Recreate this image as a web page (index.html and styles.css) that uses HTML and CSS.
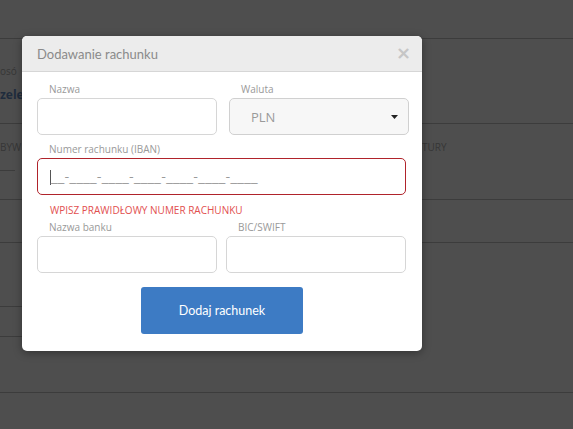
FILE: index.html
```html
<!DOCTYPE html>
<html lang="pl">

<head>
  <meta charset="UTF-8">
  <meta name="viewport" content="width=device-width, initial-scale=1.0">
  <title>Dodawanie rachunku</title>
  <link rel="stylesheet" href="styles.css">
</head>

<body>
  <!-- Page behind the overlay -->
  <div class="page">
    <div class="row row-top"></div>
    <div class="row row-summary">
      <div class="cell-left">
        <span class="muted">osó</span>
        <span class="strong">zele</span>
      </div>
    </div>
    <div class="row row-head">
      <span class="muted head-left">BYW</span>
      <span class="muted head-right">TURY</span>
      <div class="stub stub-head"></div>
    </div>
    <div class="row row-a"></div>
    <div class="row row-plain">
      <div class="stub stub-b"></div>
      <div class="stub stub-c"></div>
    </div>
  </div>

  <!-- Modal -->
  <div class="modal">
    <div class="modal-header">
      <span class="modal-title">Dodawanie rachunku</span>
      <span class="modal-close">&times;</span>
    </div>

    <div class="modal-body">
      <div class="grid grid-top">
        <div class="field">
          <label for="name">Nazwa</label>
          <input type="text" id="name">
        </div>
        <div class="field">
          <label for="currency">Waluta</label>
          <div class="select" id="currency">
            <span>PLN</span>
            <svg width="7" height="4" viewBox="0 0 7 4"><path d="M0 0h7L3.5 4z" fill="#222"/></svg>
          </div>
        </div>
      </div>

      <div class="field field-iban">
        <label for="iban">Numer rachunku (IBAN)</label>
        <div class="input input-error" id="iban">
          <span class="caret"></span><span class="mask">__-____-____-____-____-____-____</span>
        </div>
      </div>
      <div class="error">WPISZ PRAWIDŁOWY NUMER RACHUNKU</div>

      <div class="grid grid-bottom">
        <div class="field">
          <label for="bank">Nazwa banku</label>
          <input type="text" id="bank">
        </div>
        <div class="field">
          <label for="swift">BIC/SWIFT</label>
          <input type="text" id="swift">
        </div>
      </div>

      <div class="actions">
        <button class="button">Dodaj rachunek</button>
      </div>
    </div>
  </div>
</body>

</html>
```

FILE: styles.css
```css
body {
  margin: 0;
  background-color: #4e4e4e;
  font-family: "Open Sans", "DejaVu Sans", sans-serif;
  overflow: hidden;
  height: 429px;
}

/* background page */
.page {
  width: 573px;
}

.row {
  border-bottom: 1px solid #3c3c3c;
  position: relative;
}

.row-top {
  height: 38px;
}

.row-summary {
  height: 84px;
}

.cell-left {
  padding: 25px 0 0 0;
  display: flex;
  flex-direction: column;
  gap: 8px;
  width: 22px;
  white-space: nowrap;
}

.muted {
  color: #363636;
  font-size: 10px;
}

.strong {
  color: #1f2c3d;
  font-weight: bold;
  font-size: 12px;
}

.row-head {
  height: 75px;
}

.head-left {
  position: absolute;
  left: 0;
  top: 16px;
}

.head-right {
  position: absolute;
  left: 422px;
  top: 16px;
}

.stub {
  border-bottom: 1px solid #3c3c3c;
  width: 22px;
}

.stub-head {
  position: absolute;
  left: 0;
  top: 46px;
  width: 15px;
}

.row-a {
  height: 42px;
}

.row-plain {
  height: 149px;
}

.stub-b {
  height: 63px;
}

.stub-c {
  height: 29px;
}

/* modal */
.modal {
  position: absolute;
  left: 22px;
  top: 36px;
  width: 400px;
  background: #fff;
  border-radius: 5px;
  box-shadow: 0 2px 8px rgba(0, 0, 0, 0.35);
  overflow: hidden;
}

.modal-header {
  height: 35px;
  background: #ececec;
  border-bottom: 1px solid #d6d6d6;
  display: flex;
  align-items: center;
  justify-content: space-between;
  padding: 0 11px 0 15px;
}

.modal-title {
  font-family: Lato, "Open Sans", sans-serif;
  font-size: 13px;
  color: #8a8a8a;
}

.modal-close {
  font-family: "DejaVu Sans", sans-serif;
  font-size: 18px;
  font-weight: bold;
  color: #c6c6c6;
  margin-top: -3px;
}

.modal-body {
  padding: 10px 15px 17px 15px;
}

.grid {
  display: grid;
  grid-template-columns: 180px 180px;
}

.grid-top {
  column-gap: 12px;
  margin-bottom: 7px;
}

.grid-bottom {
  column-gap: 9px;
}

.field label {
  display: block;
  font-size: 10px;
  line-height: 14px;
  color: #999;
  margin: 0 0 2px 12px;
}

.field input,
.input,
.select {
  display: block;
  box-sizing: border-box;
  width: 100%;
  height: 37px;
  border: 1px solid #d6d6d6;
  border-radius: 5px;
  background: #fff;
  margin: 0;
}

.select {
  background: #f7f7f7;
  border-color: #d0d0d0;
  display: flex;
  align-items: center;
  justify-content: space-between;
  padding: 0 10px 0 21px;
  font-size: 13px;
  color: #9a9a9a;
}

.field-iban .input {
  width: 369px;
}

.field-iban .input-error {
  border-color: #b0232b;
  display: flex;
  align-items: center;
  padding-left: 12px;
}

.caret {
  width: 1px;
  height: 15px;
  background: #555;
  margin-top: 2px;
}

.mask {
  font-family: "DejaVu Sans", sans-serif;
  font-size: 13px;
  color: #9a9a9a;
  letter-spacing: 0.3px;
}

.error {
  font-size: 10px;
  line-height: 14px;
  color: #e2504f;
  margin: 8px 0 3px 13px;
}

.actions {
  display: flex;
  justify-content: center;
  margin-top: 14px;
}

.button {
  width: 162px;
  height: 47px;
  background-color: #3d7bc4;
  color: #fff;
  border: none;
  border-radius: 3px;
  font-family: Lato, "Open Sans", sans-serif;
  font-size: 12.5px;
}
```
